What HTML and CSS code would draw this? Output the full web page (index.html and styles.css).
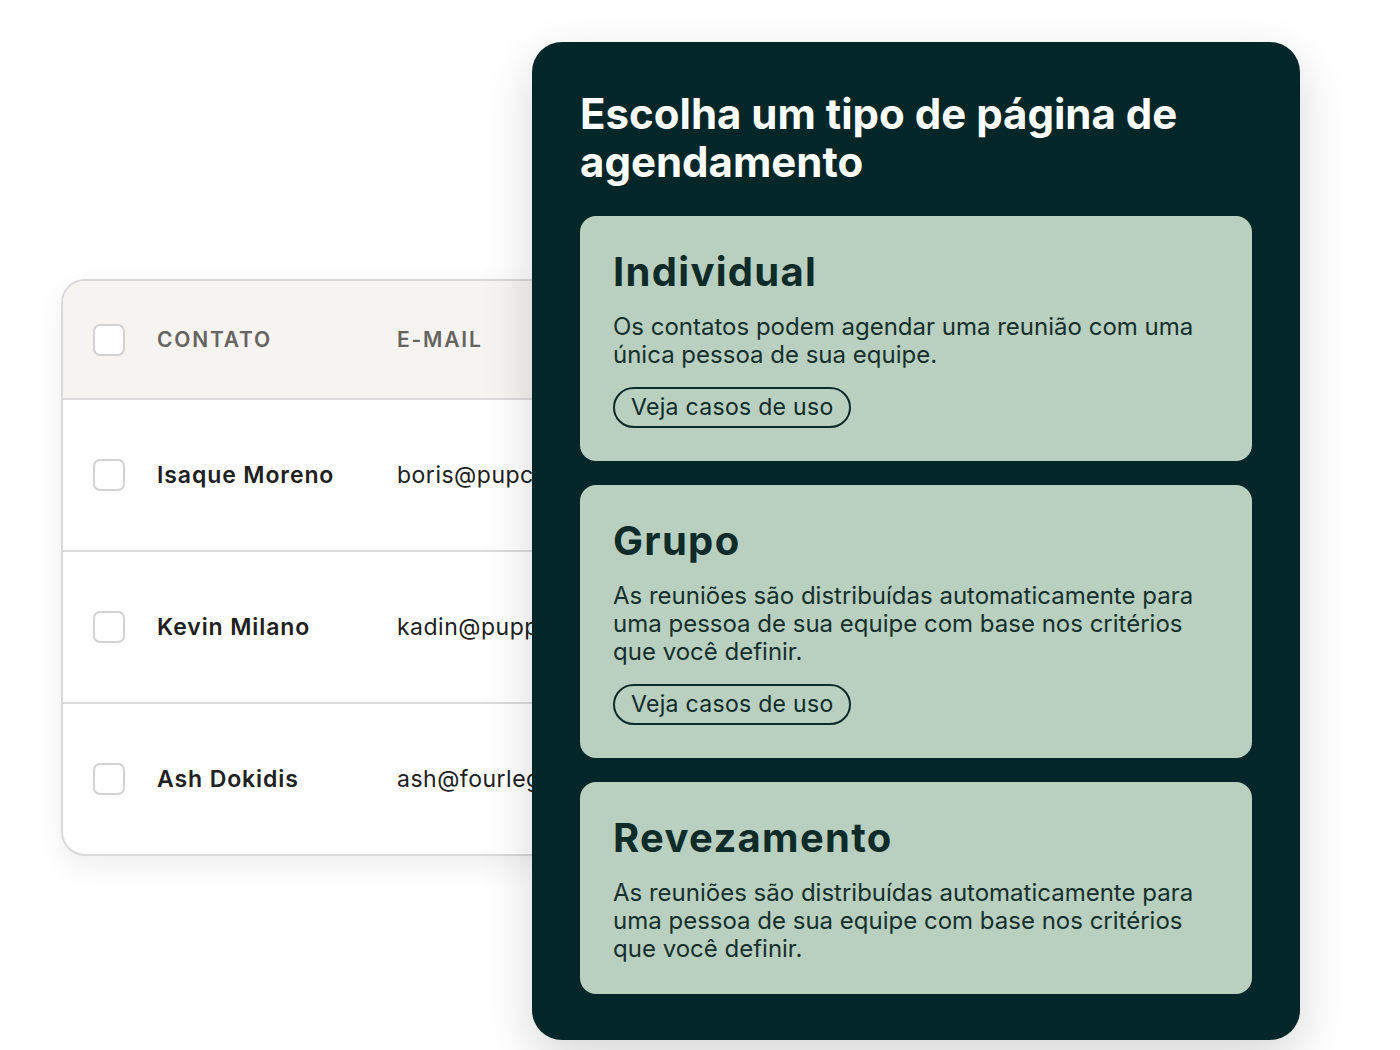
FILE: index.html
```html
<!DOCTYPE html>
<html lang="pt-BR">
<head>
<meta charset="utf-8">
<title>Páginas de agendamento</title>
<link rel="stylesheet" href="styles.css">
</head>
<body>
<main class="stage">
  <section class="contacts">
    <div class="row head">
      <span class="check"></span>
      <span class="col-label">Contato</span>
      <span class="col-label">E-mail</span>
    </div>
    <div class="row">
      <span class="check"></span>
      <span class="name">Isaque Moreno</span>
      <span class="email">boris@pupcakes.com</span>
    </div>
    <div class="row">
      <span class="check"></span>
      <span class="name">Kevin Milano</span>
      <span class="email">kadin@puppyhouse.com</span>
    </div>
    <div class="row">
      <span class="check"></span>
      <span class="name">Ash Dokidis</span>
      <span class="email">ash@fourlegs.com</span>
    </div>
  </section>

  <aside class="picker">
    <h1 class="picker-title">Escolha um tipo de página de agendamento</h1>
    <div class="options">
      <article class="option">
        <h2 class="option-title">Individual</h2>
        <p class="option-text">Os contatos podem agendar uma reunião com uma única pessoa de sua equipe.</p>
        <a class="pill" href="#">Veja casos de uso</a>
      </article>
      <article class="option">
        <h2 class="option-title">Grupo</h2>
        <p class="option-text">As reuniões são distribuídas automaticamente para uma pessoa de sua equipe com base nos critérios que você definir.</p>
        <a class="pill" href="#">Veja casos de uso</a>
      </article>
      <article class="option last">
        <h2 class="option-title">Revezamento</h2>
        <p class="option-text">As reuniões são distribuídas automaticamente para uma pessoa de sua equipe com base nos critérios que você definir.</p>
      </article>
    </div>
  </aside>
</main>
</body>
</html>
```

FILE: styles.css
```css
html, body {
  margin: 0;
  padding: 0;
  background: #ffffff;
}

body {
  font-family: "Inter", "Noto Sans", sans-serif;
  color: #1c1c1c;
}

.stage {
  position: relative;
  width: 1400px;
  height: 1050px;
  box-sizing: border-box;
  padding: 279px 0 0 61px;
  overflow: hidden;
}

/* contacts table card, its right part tucked under the picker */
.contacts {
  width: 474px;
  background: #ffffff;
  border: 2px solid #d9d9d9;
  border-right: none;
  border-radius: 24px 0 0 24px;
  overflow: hidden;
  box-shadow: 0 10px 30px rgba(0, 0, 0, 0.07);
}

.row {
  display: grid;
  grid-template-columns: 64px 240px 1fr;
  align-items: center;
  height: 150px;
  padding-left: 30px;
  border-top: 2px solid #dcdcdc;
  white-space: nowrap;
}

.row.head {
  height: 117px;
  border-top: none;
  background: #f5f4f1;
}

.check {
  width: 28px;
  height: 28px;
  border: 2px solid #d2d2d2;
  border-radius: 7px;
  background: #ffffff;
}

.col-label {
  font-size: 21px;
  font-weight: 600;
  text-transform: uppercase;
  letter-spacing: 1.8px;
  color: #666461;
}

.name {
  font-size: 23px;
  font-weight: 600;
  letter-spacing: 0.9px;
  color: #202020;
}

.email {
  overflow: hidden;
  font-size: 23px;
  font-weight: 400;
  letter-spacing: 0.5px;
  color: #202020;
}

/* scheduling type picker */
.picker {
  position: absolute;
  left: 532px;
  top: 42px;
  width: 768px;
  box-sizing: border-box;
  padding: 48px 48px 46px;
  background: #032628;
  border-radius: 30px;
  box-shadow: 0 18px 50px rgba(0, 0, 0, 0.16);
}

.picker-title {
  margin: 0 0 30px;
  font-size: 42px;
  line-height: 48px;
  font-weight: 700;
  color: #ffffff;
}

.options {
  display: flex;
  flex-direction: column;
  gap: 24px;
}

.option {
  background: #b9cfbf;
  border-radius: 16px;
  padding: 32px 33px 33px;
}

.option.last {
  padding-bottom: 31px;
}

.option-title {
  margin: 0;
  font-size: 40px;
  line-height: 48px;
  font-weight: 700;
  letter-spacing: 1.3px;
  color: #0d2b29;
}

.option-text {
  margin: 17px 0 0;
  font-size: 24px;
  line-height: 28px;
  font-weight: 400;
  color: #15302c;
}

.pill {
  display: inline-block;
  margin-top: 18px;
  height: 41px;
  box-sizing: border-box;
  padding: 0 16px;
  border: 2px solid #0d2b29;
  border-radius: 999px;
  font-size: 23px;
  line-height: 37px;
  letter-spacing: 0.3px;
  color: #0d2b29;
  text-decoration: none;
}
```
